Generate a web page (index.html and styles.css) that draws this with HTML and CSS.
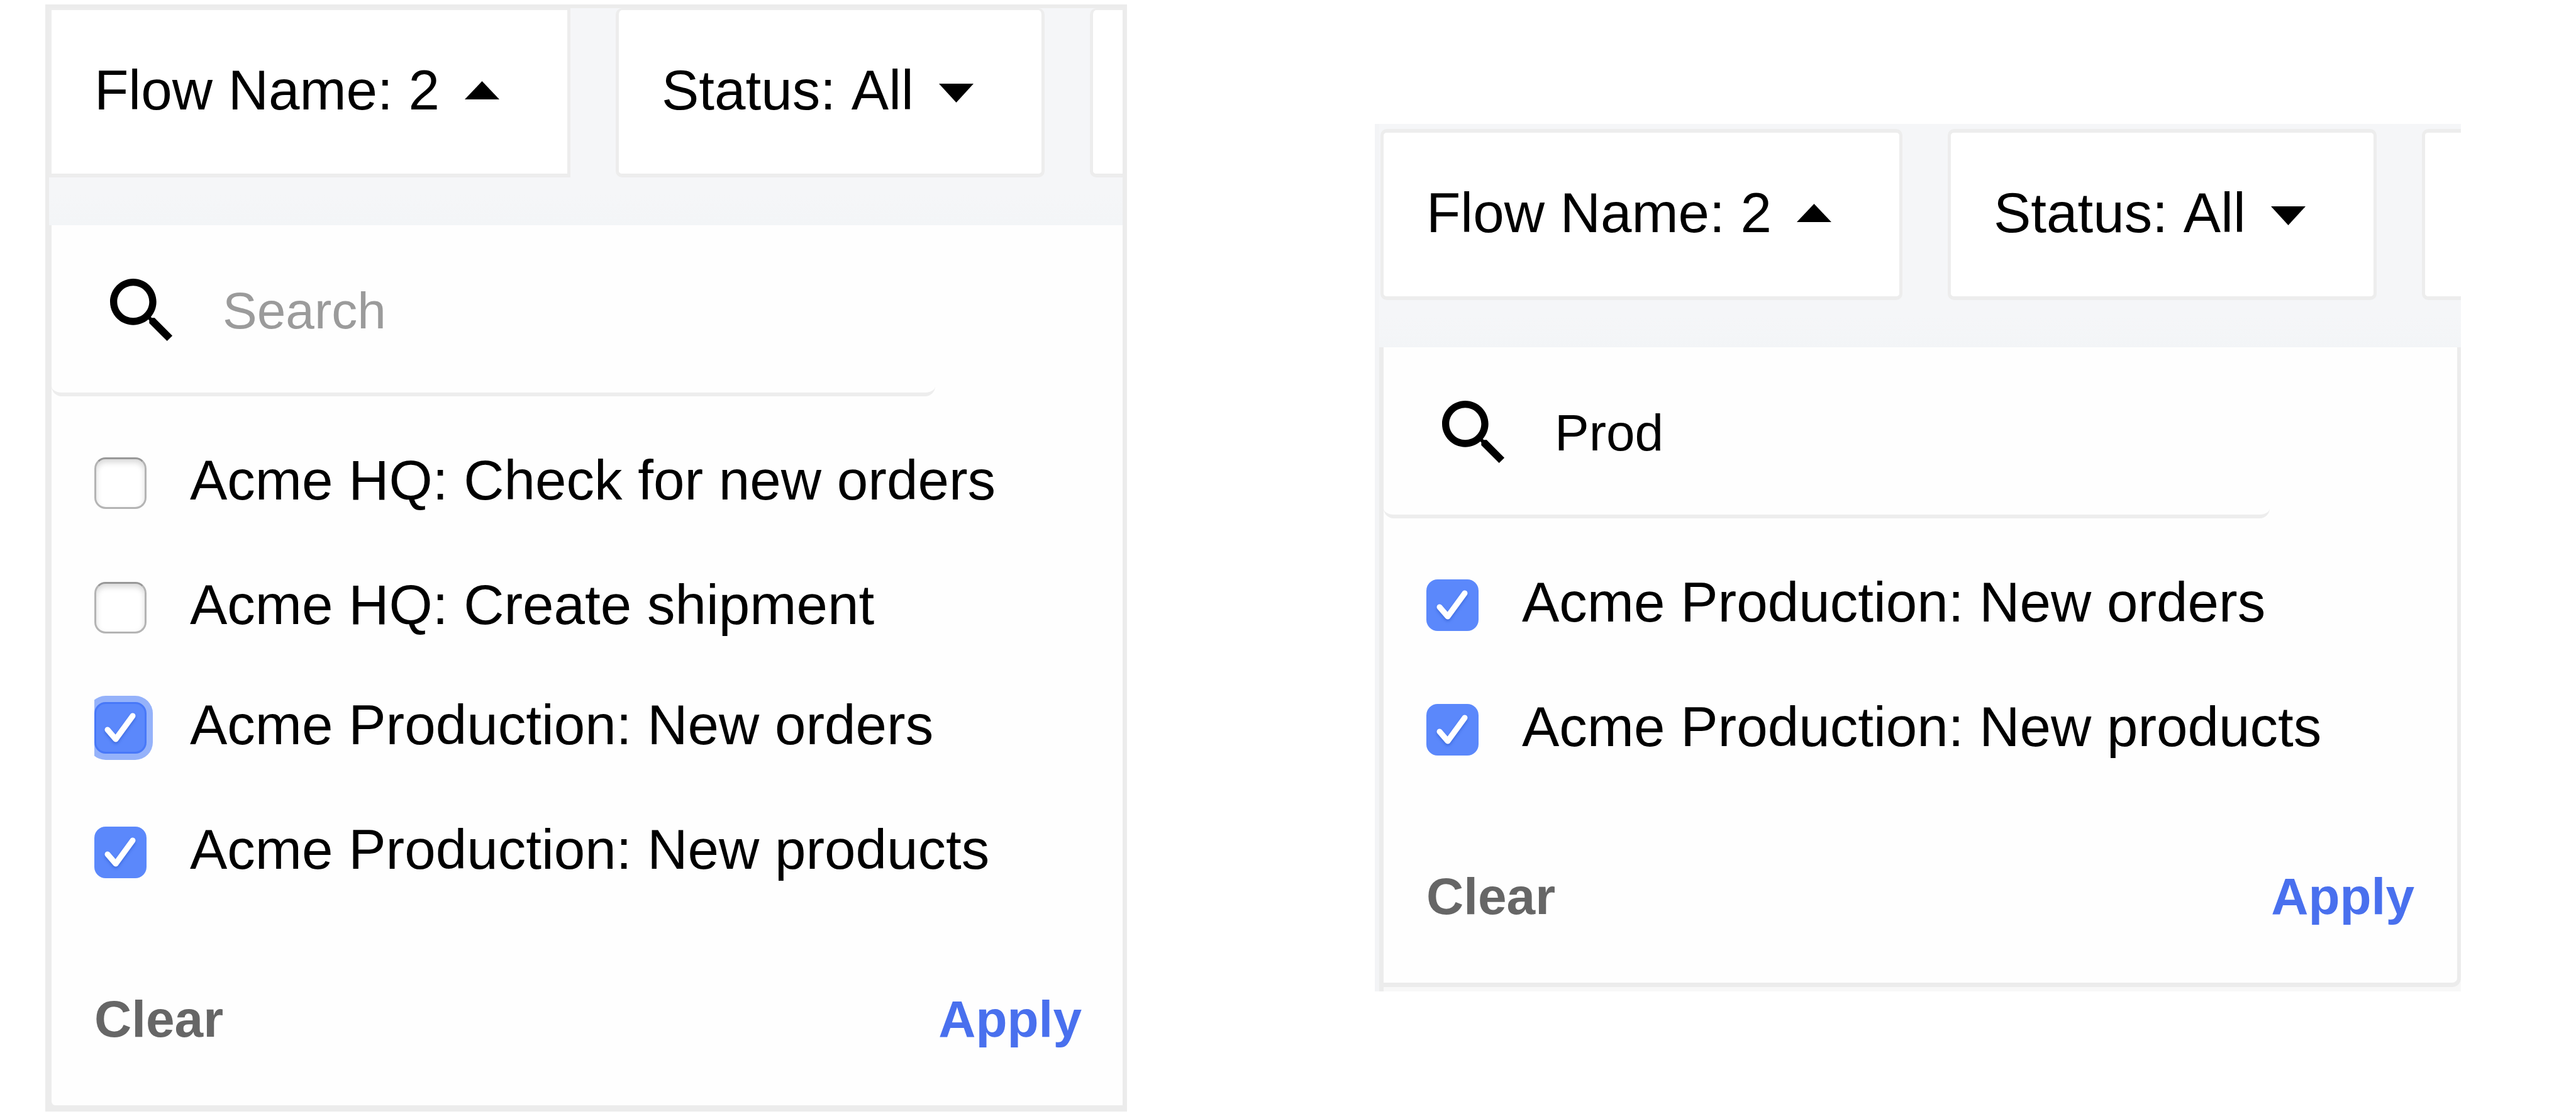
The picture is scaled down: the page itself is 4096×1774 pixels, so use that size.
FILE: index.html
```html
<!DOCTYPE html>
<html lang="en">
<head>
<meta charset="utf-8">
<title>Flow filters</title>
<link rel="stylesheet" href="styles.css">
</head>
<body>
<svg class="sprite" aria-hidden="true">
  <symbol id="icon-search" viewBox="0 0 24 24"><path d="M15.5 14h-.79l-.28-.27C15.41 12.59 16 11.11 16 9.5 16 5.91 13.09 3 9.5 3S3 5.91 3 9.5 5.91 16 9.5 16c1.61 0 3.09-.59 4.23-1.57l.27.28v.79l5 4.99L20.49 19l-4.99-5zm-6 0C7.01 14 5 11.99 5 9.5S7.01 5 9.5 5 14 7.01 14 9.5 11.99 14 9.5 14z"/></symbol>
  <symbol id="icon-up" viewBox="0 0 55 44"><path d="M0 37L27.500 8L55 37z"/></symbol>
  <symbol id="icon-down" viewBox="0 0 55 44"><path d="M0 12H55L27.500 42z"/></symbol>
  <symbol id="icon-check" viewBox="0 0 83 82"><path d="M21 44L34 59L61 22" fill="none" stroke="#fff" stroke-width="9" stroke-linecap="round" stroke-linejoin="round"/></symbol>
</svg>
<main class="page">
  <section class="panel panel-all" aria-label="Flow name filter">
    <div class="filters">
      <button type="button" class="filter" aria-expanded="true">Flow Name: 2<svg class="caret"><use href="#icon-up"/></svg></button>
      <button type="button" class="filter">Status: All<svg class="caret"><use href="#icon-down"/></svg></button>
      <button type="button" class="filter filter-cut" aria-label="More filters"></button>
    </div>
    <form class="dropdown">
      <div class="dropdown-body">
        <label class="search">
          <svg class="search-icon"><use href="#icon-search"/></svg>
          <input class="search-input" type="text" placeholder="Search" aria-label="Search">
        </label>
        <ul class="options">
          <li class="option"><label class="option-label"><span class="tick"><input type="checkbox"><svg><use href="#icon-check"/></svg></span>Acme HQ: Check for new orders</label></li>
          <li class="option option-short"><label class="option-label"><span class="tick"><input type="checkbox"><svg><use href="#icon-check"/></svg></span>Acme HQ: Create shipment</label></li>
          <li class="option"><label class="option-label"><span class="tick tick-focus"><input type="checkbox" checked><svg><use href="#icon-check"/></svg></span>Acme Production: New orders</label></li>
          <li class="option"><label class="option-label"><span class="tick"><input type="checkbox" checked><svg><use href="#icon-check"/></svg></span>Acme Production: New products</label></li>
        </ul>
        <div class="actions">
          <button type="button" class="action">Clear</button>
          <button type="button" class="action action-main">Apply</button>
        </div>
      </div>
    </form>
  </section>

  <section class="panel panel-search" aria-label="Flow name filter, searched">
    <div class="filters">
      <button type="button" class="filter" aria-expanded="true">Flow Name: 2<svg class="caret"><use href="#icon-up"/></svg></button>
      <button type="button" class="filter">Status: All<svg class="caret"><use href="#icon-down"/></svg></button>
      <button type="button" class="filter filter-cut" aria-label="More filters"></button>
    </div>
    <form class="dropdown">
      <div class="dropdown-body">
        <label class="search">
          <svg class="search-icon"><use href="#icon-search"/></svg>
          <input class="search-input" type="text" value="Prod" aria-label="Search">
        </label>
        <ul class="options">
          <li class="option"><label class="option-label"><span class="tick"><input type="checkbox" checked><svg><use href="#icon-check"/></svg></span>Acme Production: New orders</label></li>
          <li class="option"><label class="option-label"><span class="tick"><input type="checkbox" checked><svg><use href="#icon-check"/></svg></span>Acme Production: New products</label></li>
        </ul>
        <div class="actions">
          <button type="button" class="action">Clear</button>
          <button type="button" class="action action-main">Apply</button>
        </div>
      </div>
    </form>
  </section>
</main>
</body>
</html>
```
FILE: styles.css
```css
* { box-sizing: border-box; }

body {
  margin: 0;
  background: #fff;
  color: #000;
  font-family: "Liberation Sans", Arial, Helvetica, sans-serif;
  font-size: 89px;
  font-kerning: none;
  line-height: 100px;
}

button, input { font: inherit; color: inherit; }

.sprite { display: none; }

.page {
  display: grid;
  grid-template-columns: 1720fr 1727fr;
  gap: 394px;
  align-items: start;
  padding: 7px 183px 7px 72px;
}

.panel { min-width: 0; }

.panel-all {
  border: 6px solid #ececec;
  border-right-width: 7px;
}

.panel-search {
  margin-top: 190px;
  border-left: 7px solid #f3f4f6;
}

/* Filter bar */
.filters {
  display: flex;
  gap: 72px;
  overflow: hidden;
  padding-bottom: 76px;
  background: linear-gradient(to top, #f3f5f7, #f5f6f8 48px);
}

.panel-search .filters { padding: 8px 0 75px 2px; }

.filter {
  display: flex;
  flex: none;
  align-items: center;
  gap: 40px;
  padding: 77px 108px 83px 68px;
  border: 5px solid #ededed;
  border-width: 6px 5px;
  border-radius: 10px;
  background: #fff;
  font-kerning: none;
  white-space: nowrap;
}

.panel-all .filter { border-top-width: 3px; }

.panel-all .filter:first-child {
  border-left-width: 4px;
  border-radius: 0;
}

.filter.filter-cut {
  flex: 1;
  padding: 0;
  border-right: 0;
  border-radius: 10px 0 0 10px;
}

.caret { width: 55px; height: 44px; }

/* Dropdown */
.dropdown {
  border-left: 4px solid #ececec;
  background: #ececec;
}

.dropdown-body { background: #fefefe; }

.panel-all .dropdown-body {
  margin-bottom: 4px;
  border-bottom-left-radius: 6px;
}

.panel-all .dropdown { display: flow-root; }

.panel-search .dropdown {
  padding-bottom: 7px;
  border-left-width: 7px;
  background: #f8f8f8;
}

.panel-search .dropdown-body {
  border: solid #ececec;
  border-width: 0 6px 7px 0;
  border-bottom-right-radius: 14px;
}

.search {
  display: flex;
  align-items: center;
  gap: 60px;
  margin-right: 298px;
  padding: 68px 0 62px 76px;
  border-bottom: 6px solid #ededed;
  border-radius: 0 0 16px 16px;
}

.search-icon { flex: none; width: 136px; height: 136px; }

.search-input {
  flex: 1;
  min-width: 0;
  height: 100px;
  padding: 0;
  border: 0;
  outline: 0;
  background: transparent;
  font-size: 82px;
}

.search-input::placeholder { color: #9b9b9b; opacity: 1; }

.options {
  margin: 0;
  padding: 83px 0 0 68px;
  list-style: none;
}

.option { height: 198px; }
.option-short { height: 191px; }

.option-label {
  display: flex;
  align-items: flex-start;
  gap: 69px;
  white-space: nowrap;
}

.tick {
  display: grid;
  flex: none;
  margin-top: 14px;
}

.tick input, .tick svg {
  grid-area: 1 / 1;
  width: 83px;
  height: 82px;
  margin: 0;
}

.tick input {
  appearance: none;
  border: 3px solid #b4b4b4;
  border-top-color: #989898;
  border-radius: 18px;
  background: #fff;
  box-shadow: inset 0 5px 10px #d8d8d8;
}

.tick svg {
  visibility: hidden;
  pointer-events: none;
  filter: drop-shadow(0 3px 2px #3f6ce0);
}

.tick input:checked {
  border: 0;
  background: #5b88fb;
  box-shadow: none;
}

.tick input:checked + svg { visibility: visible; }

.tick-focus input:checked {
  border: 3px solid #4878f8;
  box-shadow: 0 0 0 10px #95b2fa;
  clip-path: inset(-10px -10px -10px 0);
}

.actions {
  display: flex;
  justify-content: space-between;
  padding: 72px 65px 87px 68px;
}

.action {
  padding: 0;
  border: 0;
  background: none;
  color: #666;
  font-size: 82px;
  font-weight: 700;
}

.action-main { color: #4970ee; }

.panel-search .actions { padding-right: 68px; }
```
